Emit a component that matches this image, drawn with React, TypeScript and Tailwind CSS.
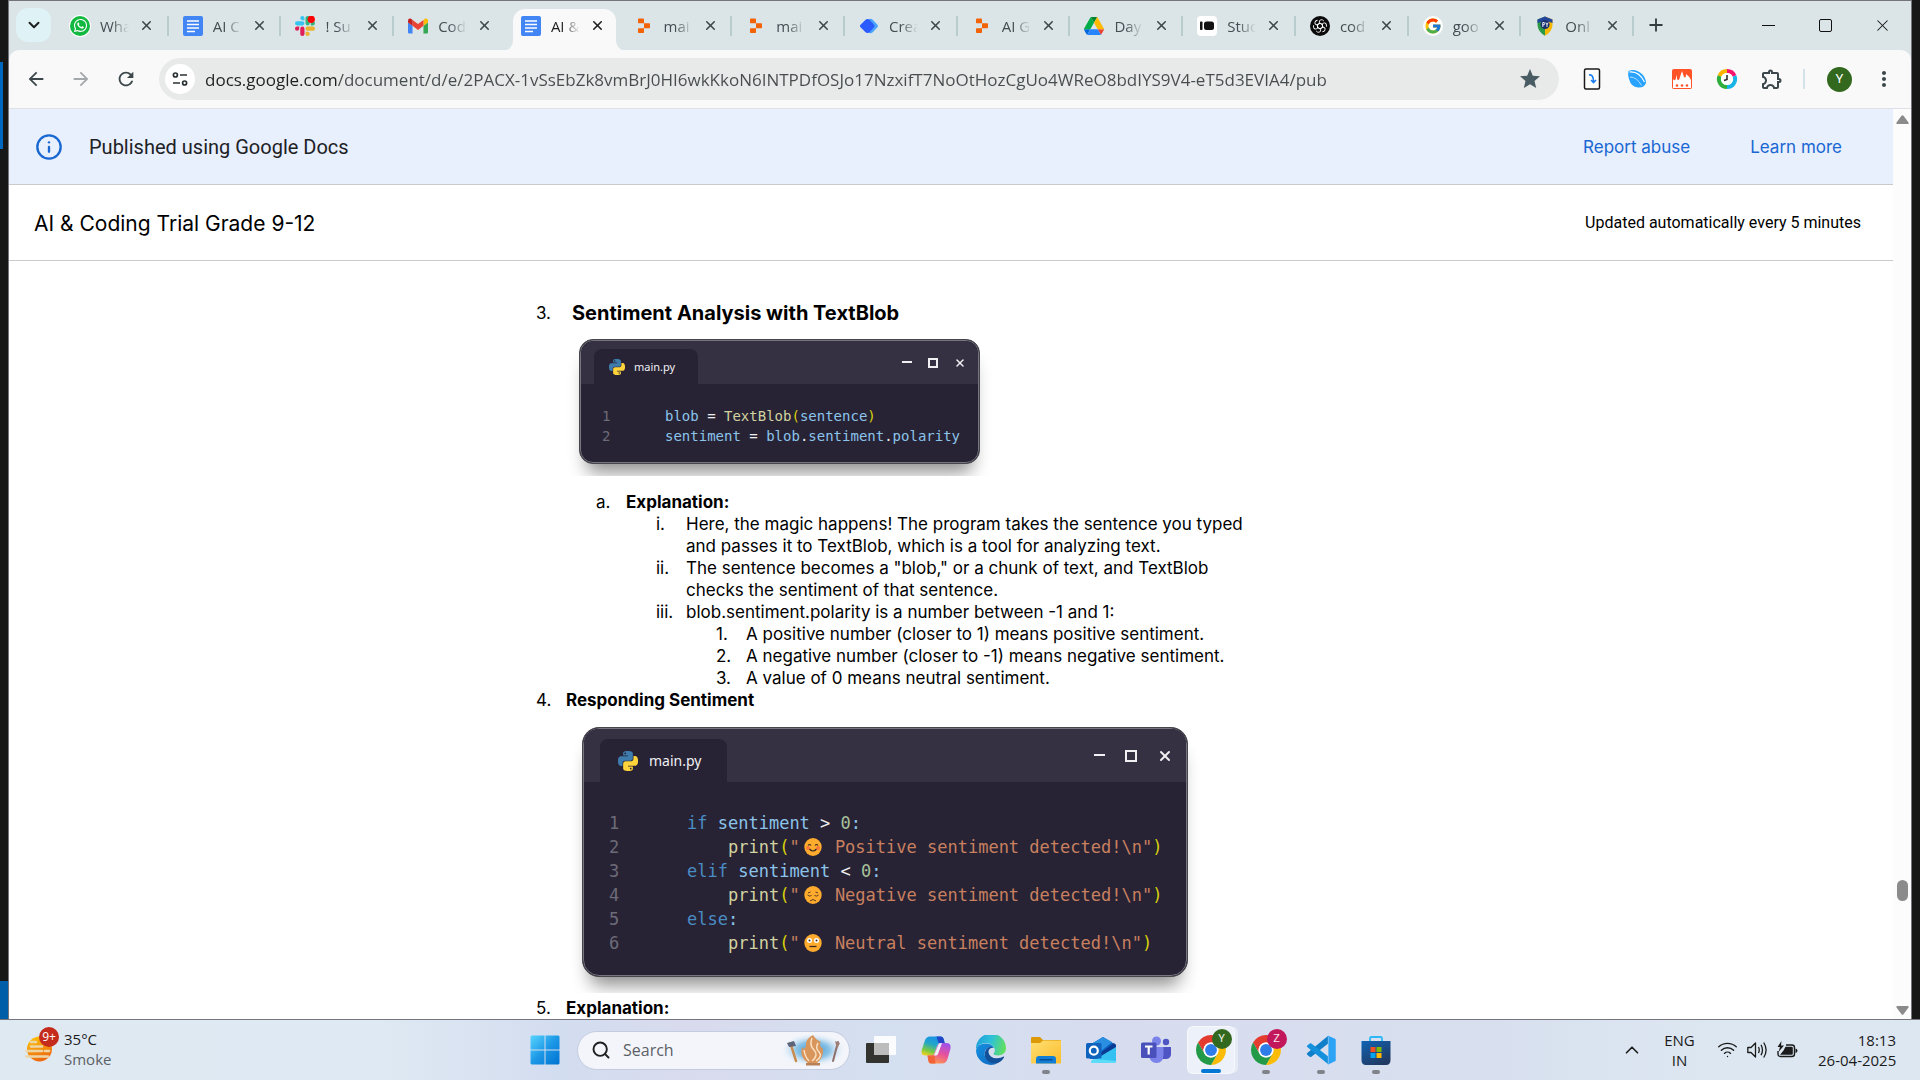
import type { ReactNode } from "react";
import { FcGoogle } from "react-icons/fc";
import { FaWhatsapp } from "react-icons/fa";
import { MdArrowBack, MdArrowForward, MdRefresh, MdStar, MdMoreVert, MdOutlineExtension } from "react-icons/md";
import { X, Plus, ChevronDown, ChevronUp, Info, Search, Wifi } from "lucide-react";

/* ---------- favicons ---------- */

const WhatsAppIcon = () => (
  <span className="flex size-5 items-center justify-center rounded-full bg-[#12b83f] ring-1 ring-white">
    <FaWhatsapp className="size-[15px] text-white" />
  </span>
);

const DocsIcon = () => (
  <svg viewBox="0 0 20 20" className="size-5">
    <rect width="20" height="20" rx="2" fill="#4285f4" />
    <path d="M4 5h12M4 8.500h12M4 12h12M4 15.500h8" stroke="#fff" strokeWidth="1.7" />
  </svg>
);

const SLACK =
  "M5.042 15.165a2.528 2.528 0 0 1-2.52 2.523A2.528 2.528 0 0 1 0 15.165a2.527 2.527 0 0 1 2.522-2.52h2.52v2.52zM6.313 15.165a2.527 2.527 0 0 1 2.521-2.52 2.527 2.527 0 0 1 2.521 2.52v6.313A2.528 2.528 0 0 1 8.834 24a2.528 2.528 0 0 1-2.521-2.522v-6.313z";

const SlackIcon = () => (
  <svg viewBox="0 0 24 24" className="size-5">
    <path d={SLACK} fill="#e01e5a" />
    <path d={SLACK} fill="#36c5f0" transform="rotate(90 12 12)" />
    <path d={SLACK} fill="#2eb67d" transform="rotate(180 12 12)" />
    <path d={SLACK} fill="#ecb22e" transform="rotate(270 12 12)" />
    <circle cx="19.5" cy="4" r="4.4" fill="#f00" />
  </svg>
);

const GmailIcon = () => (
  <svg viewBox="0 0 512 512" className="size-5">
    <path fill="#4285f4" d="M34.91 448.818h81.454V251L0 163.727V413.91c0 19.287 15.622 34.91 34.91 34.91z" />
    <path fill="#34a853" d="M395.636 448.818h81.455c19.287 0 34.909-15.622 34.909-34.909V163.727L395.636 251z" />
    <path fill="#fbbc04" d="M395.636 99.727V251L512 163.727v-46.545c0-43.142-49.25-67.782-83.782-41.891z" />
    <path fill="#ea4335" d="M116.364 251V99.727L256 204.455 395.636 99.727V251L256 355.727z" />
    <path fill="#c5221f" d="M0 117.182v46.545L116.364 251V99.727L83.782 75.29C49.25 49.4 0 74.04 0 117.18z" />
  </svg>
);

const ReplitIcon = () => (
  <svg viewBox="0 0 20 20" className="size-5" fill="#f26207">
    <path d="M4 3.2Q4 2.4 4.8 2.4H9.2Q10 2.4 10 3.2V7.3H4.8Q4 7.3 4 6.5z" />
    <path d="M10 7.3H15.2Q16 7.3 16 8.1V11.4Q16 12.2 15.2 12.2H10z" />
    <path d="M4 13Q4 12.2 4.8 12.2H10V16.3Q10 17.1 9.2 17.1H4.8Q4 17.1 4 16.3z" />
  </svg>
);

const DiamondIcon = () => (
  <svg viewBox="0 0 20 20" className="size-5">
    <path d="M9 4Q11.500 1.500 14 4L18.600 9Q19.500 10 18.600 11L14 16Q11.500 18.500 9 16z" fill="#4aa3ff" />
    <path d="M6.300 4Q8.500 1.800 10.700 4L15.200 9Q16 10 15.200 11L10.700 16Q8.500 18.200 6.300 16L1.300 11Q.5 10 1.300 9z" fill="#2b5bff" />
  </svg>
);

const DriveIcon = () => (
  <svg viewBox="0 0 87.3 78" className="size-5">
    <path d="m6.6 66.85 3.85 6.65c.8 1.4 1.95 2.5 3.3 3.3l13.75-23.8h-27.5c0 1.55.4 3.1 1.2 4.5z" fill="#0066da" />
    <path d="m43.65 25-13.75-23.8c-1.35.8-2.5 1.9-3.3 3.3l-25.4 44a9.06 9.06 0 0 0 -1.2 4.5h27.5z" fill="#00ac47" />
    <path d="m73.55 76.8c1.35-.8 2.5-1.9 3.3-3.3l1.6-2.75 7.65-13.25c.8-1.4 1.2-2.95 1.2-4.5h-27.502l5.852 11.5z" fill="#ea4335" />
    <path d="m43.65 25 13.75-23.8c-1.35-.8-2.9-1.2-4.5-1.2h-18.5c-1.6 0-3.15.45-4.5 1.2z" fill="#00832d" />
    <path d="m59.8 53h-32.3l-13.75 23.8c1.35.8 2.9 1.2 4.5 1.2h50.8c1.6 0 3.15-.45 4.5-1.2z" fill="#2684fc" />
    <path d="m73.4 26.5-12.7-22c-.8-1.4-1.95-2.5-3.3-3.3l-13.75 23.8 16.15 28h27.45c0-1.55-.4-3.1-1.2-4.5z" fill="#ffba00" />
  </svg>
);

const StudioIcon = () => (
  <svg viewBox="0 0 20 20" className="size-5">
    <rect width="20" height="20" rx="4" fill="#fff" />
    <rect x="3" y="5.500" width="2.500" height="8.500" rx=".8" fill="#111" />
    <rect x="7" y="5.500" width="10" height="8.500" rx="2.500" fill="#111" />
  </svg>
);

const OpenAiIcon = () => (
  <svg viewBox="0 0 20 20" className="size-5">
    <circle cx="10" cy="10" r="10" fill="#0a0a0a" />
    <g fill="none" stroke="#fff" strokeWidth="0.9" strokeLinejoin="round">
      {[0, 60, 120, 180, 240, 300].map((a) => (
        <path key={a} transform={`rotate(${a} 10 10)`} d="M12.400 11.300V8.500L9.300 6.700Q8.800 4 11.200 3.700Q12.800 3.600 13.800 5" />
      ))}
    </g>
  </svg>
);

const GoogleIcon = () => (
  <span className="flex size-5 items-center justify-center rounded-full bg-white">
    <FcGoogle className="size-[18px]" />
  </span>
);

const ShieldIcon = () => (
  <svg viewBox="0 0 20 20" className="size-5">
    <path d="M10 .5 17.500 3.500V9Q17 16 10 19.700z" fill="#f5b800" />
    <path d="M10 .5 2.500 3.500V9Q3 16 10 19.700z" fill="#2b9a47" />
    <path d="M10 .5 17.500 3.500V7L10 4.500 2.500 7V3.500z" fill="#24459c" />
    <circle cx="10" cy="8.500" r="4.600" fill="#17306e" />
    <path d="M7.800 11V6.500H9.200Q10.200 7.700 9.200 8.800H7.800M10.800 6.500 12 8.700V11M13.200 6.500 12 8.700" fill="none" stroke="#fff" strokeWidth=".9" />
  </svg>
);

const TABS: { title: string; icon: ReactNode }[] = [
  { title: "Wha", icon: <WhatsAppIcon /> },
  { title: "AI C", icon: <DocsIcon /> },
  { title: "! Su", icon: <SlackIcon /> },
  { title: "Cod", icon: <GmailIcon /> },
  { title: "AI &", icon: <DocsIcon /> },
  { title: "mai", icon: <ReplitIcon /> },
  { title: "mai", icon: <ReplitIcon /> },
  { title: "Crea", icon: <DiamondIcon /> },
  { title: "AI G", icon: <ReplitIcon /> },
  { title: "Day", icon: <DriveIcon /> },
  { title: "Stud", icon: <StudioIcon /> },
  { title: "cod", icon: <OpenAiIcon /> },
  { title: "goo", icon: <GoogleIcon /> },
  { title: "Onl", icon: <ShieldIcon /> },
];
const ACTIVE = 4;

/* ---------- browser chrome ---------- */

function Tab({ index }: { index: number }) {
  const active = index === ACTIVE;
  const { title, icon } = TABS[index];
  return (
    <li className="flex min-w-0 flex-1 items-center">
      <div className={`relative ml-[6px] mr-[2px] mt-2 flex h-[42px] min-w-0 flex-1 items-center rounded-t-xl pb-2 pl-2 pr-2 ${active ? "bg-[#f9f9f9]" : ""}`}>
        {active && (
          <>
            <svg viewBox="0 0 12 12" className="absolute bottom-0 right-full size-3" fill="#f9f9f9"><path d="M12 0V12H0Q12 12 12 0z" /></svg>
            <svg viewBox="0 0 12 12" className="absolute bottom-0 left-full size-3" fill="#f9f9f9"><path d="M0 0V12H12Q0 12 0 0z" /></svg>
          </>
        )}
        <span className="shrink-0">{icon}</span>
        <span className={`ml-[10px] w-8 overflow-hidden whitespace-nowrap text-[15px] leading-5 [mask-image:linear-gradient(90deg,#000_35%,transparent_90%)] ${active ? "text-[#1f1f1f]" : "text-[#444d52]"}`}>{title}</span>
        <button aria-label={`Close ${title}`} className={`ml-auto flex size-5 shrink-0 items-center justify-center ${active ? "text-[#1f1f1f]" : "text-[#3c474b]"}`}>
          <X className="size-[15px]" strokeWidth={2.5} />
        </button>
      </div>
      <span className={`h-5 w-[2px] ${index === ACTIVE || index === ACTIVE - 1 ? "" : "bg-[#b9cccd]"}`} />
    </li>
  );
}

function TabStrip() {
  return (
    <div className="flex h-[49px] bg-[#dbe4e7]">
      <button aria-label="Search tabs" className="ml-[7px] mt-[7px] flex h-[34px] w-[35px] shrink-0 items-center justify-center rounded-xl bg-[#dff3f7]">
        <ChevronDown className="size-[18px] text-[#1f1f1f]" strokeWidth={2.6} />
      </button>
      <ul className="ml-[5px] flex w-[1578px] min-w-0 shrink">
        {TABS.map((_, i) => <Tab key={i} index={i} />)}
      </ul>
      <button aria-label="New tab" className="ml-2 flex h-12 w-7 items-center justify-center text-[#333d40]">
        <Plus className="size-5" strokeWidth={2.2} />
      </button>
      <div className="ml-auto flex h-12 shrink-0">
        <button aria-label="Minimize" className="flex w-[57px] items-center justify-center"><span className="h-px w-[13px] bg-[#111]" /></button>
        <button aria-label="Maximize" className="flex w-[57px] items-center justify-center"><span className="size-[13px] rounded-[2px] border border-[#111]" /></button>
        <button aria-label="Close" className="flex w-[57px] items-center justify-center"><X className="size-[19px] text-[#111]" strokeWidth={1.3} /></button>
      </div>
    </div>
  );
}

const ext = "flex h-10 w-[45px] items-center justify-center";

function Toolbar() {
  return (
    <div className="bg-[#dbe4e7]">
      <div className="flex h-[58px] items-center rounded-t-[10px] bg-[#f9f9f9] pl-1 text-[#3c474b]">
        <button aria-label="Back" className={ext}><MdArrowBack className="size-[22px]" /></button>
        <button aria-label="Forward" className={`${ext} text-[#a3a8aa]`}><MdArrowForward className="size-[22px]" /></button>
        <button aria-label="Reload" className={ext}><MdRefresh className="size-[22px]" /></button>
        <div className="ml-[11px] flex h-[42px] min-w-0 flex-1 items-center rounded-full bg-[#e8eae9] pl-[6px] pr-[17px]">
          <button aria-label="View site information" className="flex size-[30px] shrink-0 items-center justify-center rounded-full bg-white">
            <svg viewBox="0 0 16 16" className="size-4" fill="none" stroke="#2b3336" strokeWidth="1.7">
              <circle cx="3.400" cy="4" r="2" /><path d="M8 4h7M1 12h7" /><circle cx="12.600" cy="12" r="2" />
            </svg>
          </button>
          <input
            aria-label="Address and search bar"
            defaultValue="docs.google.com/document/d/e/2PACX-1vSsEbZk8vmBrJ0HI6wkKkoN6INTPDfOSJo17NzxifT7NoOtHozCgUo4WReO8bdIYS9V4-eT5d3EVIA4/pub"
            className="ml-[10px] min-w-0 flex-1 bg-[linear-gradient(90deg,#1f1f1f_132px,#474c4e_132px)] bg-clip-text pt-[2px] text-[17px] leading-6 text-transparent outline-none"
          />
          <button aria-label="Bookmark" className="shrink-0 text-[#4a5c63]"><MdStar className="size-6" /></button>
        </div>
        <div className="ml-[10px] flex items-center">
          <button aria-label="Clipper" className={ext}>
            <svg viewBox="0 0 22 22" className="size-[22px]" fill="none">
              <rect x="3.500" y="1" width="15" height="20" rx="1.500" fill="#fff" stroke="#1b1b1b" strokeWidth="1.500" />
              <path d="M8 7Q12.500 6 12.500 14M10 12l2.500 2.500 2.500-2.500" stroke="#1a7df0" strokeWidth="1.600" />
            </svg>
          </button>
          <button aria-label="Globe" className={ext}>
            <svg viewBox="0 0 22 22" className="size-[22px]">
              <path d="M2.500 3Q9 0 16 6Q20 10 20 15Q18 20 12 19.500Q5 19 3 11Q1.500 6 2.500 3z" fill="#29a3ff" />
              <path d="M3.500 4Q13 3 18.500 14" fill="none" stroke="#fff" strokeWidth="1.100" />
              <path d="M4 9Q11 9 15.500 17.500" fill="none" stroke="#bfe2ff" strokeWidth=".9" />
            </svg>
          </button>
          <button aria-label="Heatmap" className={ext}>
            <svg viewBox="0 0 22 22" className="size-[22px]">
              <rect x="1" y="1" width="20" height="20" rx="2" fill="#ff5226" />
              <path d="M2 15V11Q4 14 5 10Q6 4 6 11Q8 14 9 9L11 3 13 9Q15 11 15 6Q18 8 20 12V15z" fill="#fff" />
              <path d="M2 14H20V20H2z" fill="#fff" />
              <g fill="#ff5226"><circle cx="6" cy="17.500" r="1.300" /><circle cx="11" cy="17.500" r="1.300" /><circle cx="16" cy="17.500" r="1.300" /></g>
            </svg>
          </button>
          <button aria-label="History timer" className={ext}>
            <svg viewBox="0 0 22 22" className="size-[22px]" fill="none" strokeWidth="4">
              <path d="M11 3A8 8 0 0 1 18.500 8" stroke="#f5156c" />
              <path d="M3.500 8A8 8 0 0 1 11 3" stroke="#ffb400" />
              <path d="M11 19A8 8 0 0 1 3.500 8" stroke="#2fae3e" />
              <path d="M18.500 8A8 8 0 0 1 11 19" stroke="#18b4e8" />
              <circle cx="11" cy="11" r="6" fill="#fff" />
              <path d="M11 7V11.500L8 12.500" stroke="#222" strokeWidth="1.500" />
            </svg>
          </button>
          <button aria-label="Extensions" className={ext}><MdOutlineExtension className="size-6" /></button>
          <span className="ml-[9px] h-5 w-[2px] bg-[#d3e3e6]" />
          <button aria-label="Profile" className="ml-[22px] flex size-[25px] items-center justify-center rounded-full bg-[#33691e] font-[Roboto] text-[13px] text-white">Y</button>
          <button aria-label="More" className={`${ext} ml-[9px] mr-[5px]`}><MdMoreVert className="size-6" /></button>
        </div>
      </div>
    </div>
  );
}

/* ---------- code windows ---------- */

const PY =
  "M14.25.18l.9.2.73.26.59.3.45.32.34.34.25.34.16.33.1.3.04.26.02.2-.01.13V8.5l-.05.63-.13.55-.21.46-.26.38-.3.31-.33.25-.35.19-.35.14-.33.1-.3.07-.26.04-.21.02H8.77l-.69.05-.59.14-.5.22-.41.27-.33.32-.27.35-.2.36-.15.37-.1.35-.07.32-.04.27-.02.21v3.06H3.17l-.21-.03-.28-.07-.32-.12-.35-.18-.36-.26-.36-.36-.35-.46-.32-.59-.28-.73-.21-.88-.14-1.05-.05-1.23.06-1.22.16-1.04.24-.87.32-.71.36-.57.4-.44.42-.33.42-.24.4-.16.36-.1.32-.05.24-.01h.16l.06.01h8.16v-.83H6.18l-.01-2.75-.02-.37.05-.34.11-.31.17-.28.25-.26.31-.23.38-.2.44-.18.51-.15.58-.12.64-.1.71-.06.77-.04.84-.02 1.27.05zm-6.3 1.98l-.23.33-.08.41.08.41.23.34.33.22.41.09.41-.09.33-.22.23-.34.08-.41-.08-.41-.23-.33-.33-.22-.41-.09-.41.09z";

const PythonIcon = ({ className }: { className: string }) => (
  <svg viewBox="0 0 24 24" className={className}>
    <path d={PY} fill="#3d7cad" />
    <path d={PY} fill="#ffd43b" transform="rotate(180 12 12)" />
  </svg>
);

function Emoji({ mood }: { mood: "happy" | "sad" | "flat" }) {
  return (
    <span className="inline-block w-[25px] pl-[4px] align-middle">
      <svg viewBox="0 0 18 20" className="mb-[3px] h-5 w-[18px]" role="img" aria-label={mood}>
        <ellipse cx="9" cy="10" rx="8.700" ry="9" fill="#ffab2e" />
        {mood === "happy" && (
          <>
            <circle cx="4" cy="11" r="2" fill="#ff6a3d" opacity=".8" /><circle cx="14" cy="11" r="2" fill="#ff6a3d" opacity=".8" />
            <path d="M4 8.500Q5.500 6.500 7 8.500M11 8.500Q12.500 6.500 14 8.500M5.500 12Q9 16 12.500 12" fill="none" stroke="#3a2a20" strokeWidth="1.200" />
          </>
        )}
        {mood === "sad" && <path d="M3.500 10Q5.500 12 7.500 10.500M10.500 10.500Q12.500 12 14.500 10M6 16Q9 13 12 16M4 8L6.500 7M11.500 7L14 8" fill="none" stroke="#5a3a20" strokeWidth="1" />}
        {mood === "flat" && (
          <>
            <circle cx="5.500" cy="7.500" r="2.500" fill="#fff" /><circle cx="12.500" cy="7.500" r="2.500" fill="#fff" />
            <circle cx="5.500" cy="7.500" r="1" fill="#3a2a20" /><circle cx="12.500" cy="7.500" r="1" fill="#3a2a20" />
            <path d="M5.500 13.500h7" stroke="#3a2a20" strokeWidth="1.300" />
          </>
        )}
      </svg>
    </span>
  );
}

const V = ({ children }: { children: ReactNode }) => <span className="text-[#8cc4ea]">{children}</span>;
const K = ({ children }: { children: ReactNode }) => <span className="text-[#4a8cc4]">{children}</span>;
const F = ({ children }: { children: ReactNode }) => <span className="text-[#d2d2a0]">{children}</span>;
const P = ({ children }: { children: ReactNode }) => <span className="text-[#d9cf0c]">{children}</span>;
const S = ({ children }: { children: ReactNode }) => <span className="text-[#c9805f]">{children}</span>;
const N = ({ children }: { children: ReactNode }) => <span className="text-[#a8c19a]">{children}</span>;

const say = (mood: "happy" | "sad" | "flat", text: string) => (
  <>{"    "}<F>print</F><P>(</P><S>"</S><Emoji mood={mood} /><S>{` ${text} sentiment detected!\\n"`}</S><P>)</P></>
);

const SMALL: ReactNode[] = [
  <><V>blob</V> = <F>TextBlob</F><P>(</P><V>sentence</V><P>)</P></>,
  <><V>sentiment</V> = <V>blob</V>.<V>sentiment</V>.<V>polarity</V></>,
];
const LARGE: ReactNode[] = [
  <><K>if</K> <V>sentiment</V> {">"} <N>0</N><V>:</V></>,
  say("happy", "Positive"),
  <><K>elif</K> <V>sentiment</V> {"<"} <N>0</N><V>:</V></>,
  say("sad", "Negative"),
  <><K>else</K><V>:</V></>,
  say("flat", "Neutral"),
];

const mono = "font-['DejaVu_Sans_Mono',monospace]";

function CodeWindow({ lines, large = false }: { lines: ReactNode[]; large?: boolean }) {
  return (
    <figure className={large ? "-mx-4 overflow-hidden px-4 pb-4" : "-mx-4 overflow-hidden px-4 pb-3"}>
      <div className={`overflow-hidden border border-[#45454a] bg-[#272335] shadow-[0_16px_18px_-8px_rgba(0,0,0,0.45)] ${large ? "w-[606px] rounded-[17px]" : "w-[401px] rounded-[14px]"}`}>
        <div className={`border border-[#77757f] ${large ? "h-[248px] rounded-[16px]" : "h-[123px] rounded-[13px]"}`}>
          <div className={`flex items-end justify-between rounded-t-[14px] bg-[#353142] ${large ? "h-[53px] pl-4" : "h-[43px] pl-[13px]"}`}>
            <div className={`flex items-center rounded-t-lg bg-[#272335] font-['Noto_Sans',sans-serif] text-[#f0f0f2] ${large ? "h-[43px] w-[127px] gap-[11px] pl-[18px] text-[14px]" : "h-[35px] w-[104px] gap-[9px] pl-[15px] text-[11px]"}`}>
              <PythonIcon className={large ? "size-5" : "size-4"} />
              main.py
            </div>
            <div className={`flex items-center text-[#f0f0f2] ${large ? "h-[53px] gap-[20px] pr-[13px]" : "h-[43px] gap-[16px] pr-3"}`}>
              <span className={`mb-px h-[2px] bg-[#f0f0f2] ${large ? "w-[11px]" : "w-[10px]"}`} />
              <span className={`border-2 border-[#f0f0f2] ${large ? "size-3" : "size-[10px]"}`} />
              <X className={large ? "size-[16px]" : "size-3"} strokeWidth={3} />
            </div>
          </div>
          <pre className={`flex text-[#eee] ${large ? "pl-[25px] pt-[29px] text-[17px] leading-6" : "pl-[21px] pt-[22px] text-[14px] leading-5"}`}>
            <code className={`${mono} shrink-0 text-[#6d6b78] ${large ? "w-[78px]" : "w-[63px]"}`}>{lines.map((_, i) => <span key={i} className="block">{i + 1}</span>)}</code>
            <code className={mono}>{lines.map((l, i) => <span key={i} className={large ? "block h-6" : "block h-5"}>{l}</span>)}</code>
          </pre>
        </div>
      </div>
    </figure>
  );
}

/* ---------- document ---------- */

function Item({ mark, children }: { mark: string; children: ReactNode }) {
  return (
    <li className="flex">
      <span className="w-[30px] shrink-0">{mark}</span>
      <div className="min-w-0 flex-1">{children}</div>
    </li>
  );
}

function Doc() {
  return (
    <main className="min-h-0 flex-1 overflow-hidden bg-white">
      <article className="mx-auto max-w-[1020px] pl-[95px] pr-[207px] pt-[39px] font-[Inter,sans-serif] text-[17px] leading-[22px] text-black">
        <ol>
          <li>
            <div className="flex items-center">
              <span className="w-9">3.</span>
              <h2 className="text-[20px] font-bold leading-[26px]">Sentiment Analysis with TextBlob</h2>
            </div>
            <div className="mb-[15px] ml-[43px] mt-[13px]"><CodeWindow lines={SMALL} /></div>
            <ol className="ml-[60px]">
              <Item mark="a.">
                <strong className="font-bold">Explanation:</strong>
                <ol className="ml-[30px]">
                  <Item mark="i.">Here, the magic happens! The program takes the sentence you typed and passes it to TextBlob, which is a tool for analyzing text.</Item>
                  <Item mark="ii.">The sentence becomes a "blob," or a chunk of text, and TextBlob checks the sentiment of that sentence.</Item>
                  <Item mark="iii.">
                    blob.sentiment.polarity is a number between -1 and 1:
                    <ol className="ml-[30px]">
                      <Item mark="1.">A positive number (closer to 1) means positive sentiment.</Item>
                      <Item mark="2.">A negative number (closer to -1) means negative sentiment.</Item>
                      <Item mark="3.">A value of 0 means neutral sentiment.</Item>
                    </ol>
                  </Item>
                </ol>
              </Item>
            </ol>
          </li>
          <Item mark="4.">
            <strong className="font-bold">Responding Sentiment</strong>
            <div className="mb-1 ml-4 mt-4"><CodeWindow lines={LARGE} large /></div>
          </Item>
          <Item mark="5."><strong className="font-bold">Explanation:</strong></Item>
        </ol>
      </article>
    </main>
  );
}

/* ---------- taskbar ---------- */

const StartIcon = () => (
  <svg viewBox="0 0 30 30" className="size-[30px]">
    <defs><linearGradient id="win" x1="0" y1="0" x2="1" y2="1"><stop stopColor="#5ad4ff" /><stop offset=".5" stopColor="#1c98e6" /><stop offset="1" stopColor="#0072d0" /></linearGradient></defs>
    <path fill="url(#win)" d="M1.500.5H14.500V14.500H.5V1.500zM15.500.5H28.500L29.500 1.500V14.500H15.500zM.5 15.500H14.500V29.500H1.500L.5 28.500zM15.500 15.500H29.500V28.500L28.500 29.500H15.500z" />
  </svg>
);

const TaskViewIcon = () => (
  <svg viewBox="0 0 30 30" className="size-[30px]">
    <rect x="0" y="8" width="23" height="20" rx="1" fill="#33332f" />
    <rect x="8" y="1" width="22" height="19" rx="1" fill="#fff" opacity=".9" />
    <rect x="8" y="8" width="15" height="12" fill="#bcbcbc" />
  </svg>
);

const CopilotIcon = () => (
  <svg viewBox="0 0 30 30" className="size-[30px]">
    <defs>
      <linearGradient id="cpa" x1=".6" y1="0" x2=".2" y2="1"><stop stopColor="#1a8fe8" /><stop offset=".4" stopColor="#22a7c8" /><stop offset=".75" stopColor="#7ac943" /><stop offset="1" stopColor="#f5d021" /></linearGradient>
      <linearGradient id="cpb" x1=".7" y1="0" x2=".3" y2="1"><stop stopColor="#a050e8" /><stop offset=".5" stopColor="#e8529a" /><stop offset="1" stopColor="#ff9a4a" /></linearGradient>
    </defs>
    <path d="M15 1.500H20Q22 1.500 22.700 4L23.700 8H19Q17 8 16 11L13.500 18Q12.500 20.500 10 20.500H4.500Q-.5 20.500 .7 15L3.700 6Q5 1.500 9 1.500z" fill="url(#cpa)" />
    <path d="M15.500 1.500H20Q22 1.500 22.700 4L23.700 8H17.500z" fill="#2346c8" />
    <path d="M15 28.500H10Q8 28.500 7.400 26L6.500 20.500H10.500Q12.800 20.500 13.700 18L16.500 10.500Q17.300 8 20 8H25.500Q30.500 8 29.400 14L26.500 24Q25 28.500 21 28.500z" fill="url(#cpb)" />
    <path d="M14.500 28.500H10Q8 28.500 7.400 26L6.500 20.500H10.500Q12.800 20.500 13.300 19z" fill="#f2633a" />
    <path d="M17.500 9.500Q18.200 8 20 8H21L17 19Q16.200 21 14 20.500H12.500Q13.300 20 14 18z" fill="#eef0fa" />
  </svg>
);

const EdgeIcon = () => (
  <svg viewBox="0 0 30 30" className="size-[30px]">
    <defs>
      <linearGradient id="ea" x1="0" y1=".3" x2="1" y2=".5"><stop stopColor="#1e9fdc" /><stop offset=".5" stopColor="#2fc2d6" /><stop offset="1" stopColor="#62df5c" /></linearGradient>
      <linearGradient id="eb" x1="0" y1="0" x2=".8" y2="1"><stop stopColor="#1690e0" /><stop offset="1" stopColor="#0d6cc4" /></linearGradient>
    </defs>
    <path d="M0 14A15 15 0 0 1 30 13Q30 20 22.500 20.500Q17 20.500 17.500 18.500Q19.500 16.500 18.500 13.500Q16 8 9.500 8Q3 8 0 14z" fill="url(#ea)" />
    <path d="M0 15Q1.500 8.500 9.500 8.500Q16 8.500 18 13Q13 10.500 9.500 15Q7 20 11 24.500Q15 29 22 28Q18.500 30 15 30A15 15 0 0 1 0 15z" fill="url(#eb)" />
    <path d="M10.500 14Q14 10.500 17.500 12.500Q12 13 12.500 17.500Q14 23.500 21 23.300Q25 23 27.500 21.500Q28.500 21.500 28 22.500Q25 27.500 20 28.500Q12 28.500 9.500 23Q7.500 18 10.500 14z" fill="#12509a" />
  </svg>
);

const ExplorerIcon = () => (
  <svg viewBox="0 0 30 30" className="size-[30px]">
    <defs><linearGradient id="fx" x1="0" y1="0" x2="1" y2="1"><stop stopColor="#ffdf73" /><stop offset="1" stopColor="#fbbd2c" /></linearGradient></defs>
    <path d="M0 3Q0 2 1 2H9L12 5H29Q30 5 30 6V12H0z" fill="#dd9a08" />
    <path d="M0 8H9L12 5.500H30V27.500Q30 28.500 29 28.500H1Q0 28.500 0 27.500z" fill="url(#fx)" />
    <path d="M5 28.500V24Q5 21 8 21H22Q25 21 25 24V28.500z" fill="#127fd6" />
    <path d="M9 24.800H21" stroke="#0a4d94" strokeWidth="1.500" strokeLinecap="round" />
  </svg>
);

const OutlookIcon = () => (
  <svg viewBox="0 0 30 30" className="size-[30px]">
    <path d="M4 10 17 2 30 10V24H4z" fill="#1066c4" />
    <path d="M4 9.500 17 2 26 7 15 16z" fill="#2a8fe0" />
    <path d="M14 18 28 8 30 10V13L16 22z" fill="#0a3a94" />
    <path d="M5 28H28Q30 28 30 26V12L15 21Z" fill="#35c0f2" />
    <path d="M5 28Q5 24 9 24L30 26Q30 28 28 28z" fill="#5cdcf8" />
    <rect x="0" y="8" width="15.500" height="15.500" rx="1.500" fill="#0f63bd" />
    <circle cx="7.800" cy="15.700" r="4" fill="none" stroke="#fff" strokeWidth="2.200" />
  </svg>
);

const TeamsIcon = () => (
  <svg viewBox="0 0 30 30" className="size-[30px]">
    <circle cx="25" cy="7" r="3.200" fill="#4f55c4" />
    <path d="M21 12H30V20Q29 24 25 24H21z" fill="#4f55c4" />
    <circle cx="15.500" cy="6" r="4.500" fill="#7b83eb" />
    <path d="M8 12H22.500V20Q22 28 15.500 28T8 20z" fill="#7b83eb" />
    <rect x="0" y="7.500" width="15.500" height="15.500" rx="1.500" fill="#4a50bb" />
    <path d="M4 11.500H11.500M7.700 11.500V19.500" stroke="#fff" strokeWidth="2.200" />
  </svg>
);

const ChromeIcon = ({ letter, tone }: { letter: string; tone: string }) => (
  <span className="relative">
    <svg viewBox="2 2 44 44" className="size-[30px]">
      <path fill="#e33b2e" d="M24 13L43.050 13A22 22 0 0 0 4.950 13L14.470 29.500A11 11 0 0 1 24 13Z" />
      <path fill="#fbbc09" d="M33.530 29.500L24 46A22 22 0 0 0 43.050 13L24 13A11 11 0 0 1 33.530 29.500Z" />
      <path fill="#239a48" d="M14.470 29.500L4.950 13A22 22 0 0 0 24 46L33.530 29.500A11 11 0 0 1 14.470 29.500Z" />
      <circle cx="24" cy="24" r="11" fill="#fff" />
      <circle cx="24" cy="24" r="8.700" fill="#2f7de9" />
    </svg>
    <span className={`absolute -right-[6px] -top-[6px] flex size-5 items-center justify-center rounded-full font-[Roboto] text-[11px] text-white/90 ${tone}`}>{letter}</span>
  </span>
);

const CodeIcon = () => (
  <svg viewBox="0 0 24 24" className="size-[30px]">
    <path d="M17.500 .8V7L4.300 17.300Q3.600 17.700 3 17.300L1 15.700Q.3 15 1 14.400z" fill="#0f7fc9" />
    <path d="M17.500 23.200V17L4.300 6.700Q3.600 6.300 3 6.700L1 8.300Q.3 9 1 9.600z" fill="#1590dd" />
    <path d="M17.300 .3 23.200 3Q23.800 3.300 23.800 4V20Q23.800 20.700 23.200 21L17.300 23.700Q17.900 23 17.900 22V2Q17.900 1 17.300 .3z" fill="#2da3f5" />
  </svg>
);

const StoreIcon = () => (
  <svg viewBox="0 0 30 30" className="size-[30px]">
    <defs><linearGradient id="st" x1="0" y1="0" x2=".6" y2="1"><stop stopColor="#0f63b4" /><stop offset="1" stopColor="#213a63" /></linearGradient></defs>
    <path d="M9 6V3.500Q9 2 10.500 2H19.500Q21 2 21 3.500V6" fill="none" stroke="#2cb8f5" strokeWidth="1.800" />
    <path d="M.5 6H29.500V25Q29.500 30 25 30H5Q.5 30 .5 25z" fill="url(#st)" />
    <path d="M9.500 12h5v5h-5z" fill="#f25022" /><path d="M15.500 12h5v5h-5z" fill="#7fba00" />
    <path d="M9.500 18h5v5h-5z" fill="#00a4ef" /><path d="M15.500 18h5v5h-5z" fill="#ffb900" />
  </svg>
);

const APPS: { name: string; icon: ReactNode; state?: "open" | "active" }[] = [
  { name: "Task view", icon: <TaskViewIcon /> },
  { name: "Copilot", icon: <CopilotIcon /> },
  { name: "Microsoft Edge", icon: <EdgeIcon /> },
  { name: "File Explorer", icon: <ExplorerIcon />, state: "open" },
  { name: "Outlook", icon: <OutlookIcon /> },
  { name: "Teams", icon: <TeamsIcon /> },
  { name: "Chrome Y", icon: <ChromeIcon letter="Y" tone="bg-[#33691e]" />, state: "active" },
  { name: "Chrome Z", icon: <ChromeIcon letter="Z" tone="bg-[#c2185b]" />, state: "open" },
  { name: "Visual Studio Code", icon: <CodeIcon />, state: "open" },
  { name: "Microsoft Store", icon: <StoreIcon />, state: "open" },
];

const SculptureArt = () => (
  <svg viewBox="0 0 66 34" className="h-[34px] w-[66px]">
    <defs><radialGradient id="sg"><stop stopColor="#3c96cf" /><stop offset=".5" stopColor="#8cc3e6" /><stop offset="1" stopColor="#f3f5fb" stopOpacity="0" /></radialGradient></defs>
    <ellipse cx="32" cy="17" rx="33" ry="17" fill="url(#sg)" />
    <path d="M10 12 15 28" stroke="#c98a4b" strokeWidth="2.500" strokeLinecap="round" />
    <path d="M6 10 13 8 15 13 8 14z" fill="#5d6478" />
    <path d="M57 9 52 28" stroke="#8e6f6a" strokeWidth="2" strokeLinecap="round" />
    <path d="M54 8 59 10 56 16z" fill="#a07f78" />
    <path d="M32 2Q35 7 40 9Q37 12 42 16Q43 24 36 30H27Q18 24 21 14Q23 18 25 13Q24 6 32 2z" fill="#d9965c" />
    <path d="M31 5Q28 12 33 17T31 28M37 10Q34 15 38 19T35 28M23 17Q24 24 28 28" fill="none" stroke="#fbe0c2" strokeWidth="1.500" />
    <path d="M25 30H39V32.500H25z" fill="#b98056" />
  </svg>
);

const WeatherIcon = () => (
  <span className="relative h-[26px] w-7">
    <svg viewBox="0 0 28 26" className="h-[26px] w-7">
      <defs><linearGradient id="sun" x1="0" y1="0" x2=".4" y2="1"><stop stopColor="#ffca0a" /><stop offset="1" stopColor="#ee6a10" /></linearGradient></defs>
      <circle cx="14.500" cy="13" r="12.500" fill="url(#sun)" />
      <path d="M6 6H11M6 10.500H17M1.500 15H17M20 15H24M1.500 20.500H23" stroke="#ecd6a8" strokeWidth="2.600" strokeLinecap="round" />
    </svg>
    <span className="absolute -right-[6px] -top-[9px] flex size-5 items-center justify-center rounded-full bg-[#c42b1c] text-[12px] leading-none text-white">9+</span>
  </span>
);

function Taskbar() {
  return (
    <footer className="grid h-[61px] shrink-0 grid-cols-[1fr_auto_1fr] border-t border-[#77757c] bg-[linear-gradient(90deg,#dfe9f2_0%,#dfe9f3_20%,#d3ddf0_29%,#d8dbed_36%,#d4dff0_46%,#d7dcee_60%,#d8e0ef_78%,#dde7f1_90%)] text-[15px] leading-5 text-[#1b1b1b]">
      <button className="flex items-center gap-[11px] justify-self-start pb-[2px] pl-[25px] text-left">
        <WeatherIcon />
        <span className="flex flex-col"><span>35°C</span><span className="text-[#5c6166]">Smoke</span></span>
      </button>

      <nav className="flex items-center" aria-label="Taskbar">
        <button aria-label="Start" className="flex h-12 w-[55px] items-center justify-center"><StartIcon /></button>
        <label className="ml-[5px] mr-[3px] flex h-[39px] w-[273px] items-center rounded-full border border-[#c3cce0] bg-[#f3f5fb] pl-[13px] pr-[2px]">
          <Search className="size-5 shrink-0 text-[#1f1f1f]" strokeWidth={2.3} />
          <input type="search" placeholder="Search" aria-label="Search" className="ml-3 min-w-0 flex-1 bg-transparent text-[16px] outline-none placeholder:text-[#5c6166]" />
          <SculptureArt />
        </label>
        {APPS.map((a) => (
          <button key={a.name} aria-label={a.name} className="flex h-full w-[55px] items-center justify-center">
            <span className={`relative flex size-12 items-center justify-center rounded-md ${a.state === "active" ? "border border-white/50 bg-[#edf1f9] shadow-[4px_0_0_-1px_#e6eaf5]" : ""}`}>
              {a.icon}
              {a.state && <span className={`absolute bottom-0 h-1 rounded-full ${a.state === "active" ? "w-5 bg-[#0078d4]" : "w-2 bg-[#80838a]"}`} />}
            </span>
          </button>
        ))}
      </nav>

      <div className="flex items-center justify-self-end pb-px pr-6">
        <button aria-label="Show hidden icons" className="flex w-8 justify-center"><ChevronUp className="size-[22px]" strokeWidth={1.8} /></button>
        <button className="ml-[14px] w-[35px] text-center">ENG<br />IN</button>
        <button aria-label="Network, volume and battery" className="ml-5 flex items-center gap-[9px]">
          <Wifi className="size-[21px]" strokeWidth={1.6} />
          <svg viewBox="0 0 21 18" className="h-[18px] w-[21px]" fill="none" stroke="#1b1b1b" strokeWidth="1.300" strokeLinejoin="round">
            <path d="M.8 6.500H4L8.500 2V16L4 11.500H.8z" /><path d="M11.500 6Q13 9 11.500 12M14 3.800Q17 9 14 14.200M16.700 1.500Q21.500 9 16.700 16.500" />
          </svg>
          <svg viewBox="0 0 21 18" className="h-[18px] w-[21px]" fill="none" stroke="#1b1b1b" strokeWidth="1.400">
            <path d="M9 4H15Q17.500 4 17.500 6.500V13Q17.500 15.500 15 15.500H3.500Q1 15.500 1 13V10" />
            <path d="M8.500 5.800H14.500Q15.800 5.800 15.800 7V12.500Q15.800 13.700 14.500 13.700H3L6.500 9.500z" fill="#1b1b1b" stroke="none" />
            <path d="M18.500 7.500V12Q20.500 11.500 20.500 9.800T18.500 7.500zM4.500 0 .5 6H3L1.500 11 7 4.500H4z" fill="#1b1b1b" stroke="none" />
          </svg>
        </button>
        <button className="ml-5 w-[78px] whitespace-nowrap text-right">18:13<br />26-04-2025</button>
      </div>
    </footer>
  );
}

/* ---------- page ---------- */

export default function App() {
  return (
    <div className="flex h-screen flex-col overflow-hidden bg-[#171717] font-['Open_Sans',sans-serif]">
      <div className="flex min-h-0 flex-1">
        <div className="flex w-2 shrink-0 flex-col bg-[#171717]">
          <div className="h-[62px]" />
          <div className="h-[87px] w-[3px] bg-[#0067c0]" />
          <div className="mt-auto h-[38px] bg-[#005ea8]" />
        </div>
        <div className="flex min-w-0 flex-1 flex-col border-x border-t border-[#77757c] bg-white">
          <TabStrip />
          <Toolbar />
          <div className="flex min-h-0 flex-1 border-t border-[#dde0e4]">
            <div className="flex min-w-0 flex-1 flex-col">
              <div className="flex h-[76px] shrink-0 items-center border-b border-[#c9cacc] bg-[#e8effd] pl-[26px] pr-[51px]">
                <Info className="size-7 text-[#1967d2]" strokeWidth={2} />
                <p className="ml-[26px] font-[Roboto,sans-serif] text-[20px] text-[#202124]">Published using Google Docs</p>
                <nav className="ml-auto flex gap-[60px] pt-[2px] font-[Inter,sans-serif] text-[17px] text-[#1967d2]">
                  <a href="#report">Report abuse</a>
                  <a href="#learn">Learn more</a>
                </nav>
              </div>
              <header className="flex h-[76px] shrink-0 items-center justify-between border-b border-[#c9cacc] bg-white pl-[25px] pr-8">
                <h1 className="pt-[2px] font-[Inter,sans-serif] text-[21px] text-black">AI &amp; Coding Trial Grade 9-12</h1>
                <p className="font-[Roboto,sans-serif] text-[16px] text-black">Updated automatically every 5 minutes</p>
              </header>
              <Doc />
            </div>
            <div className="flex w-[18px] shrink-0 flex-col items-center bg-[#fcfcfc] pb-1 pt-[6px]" aria-hidden="true">
              <svg viewBox="0 0 13 9" className="h-[9px] w-[13px]" fill="#8b8b8b"><path d="M5.500 .8Q6.500-.2 7.500 .8L12.500 7.500Q13 9 11.500 9H1.500Q0 9 .5 7.500z" /></svg>
              <span className="mb-[105px] mt-auto h-[21px] w-[11px] rounded-full bg-[#8b8b8b]" />
              <svg viewBox="0 0 13 9" className="h-[9px] w-[13px]" fill="#8b8b8b"><path d="M5.500 8.200Q6.500 9.200 7.500 8.200L12.500 1.500Q13 0 11.500 0H1.500Q0 0 .5 1.500z" /></svg>
            </div>
          </div>
        </div>
        <div className="w-2 shrink-0 bg-[#171717]" />
      </div>
      <Taskbar />
    </div>
  );
}
